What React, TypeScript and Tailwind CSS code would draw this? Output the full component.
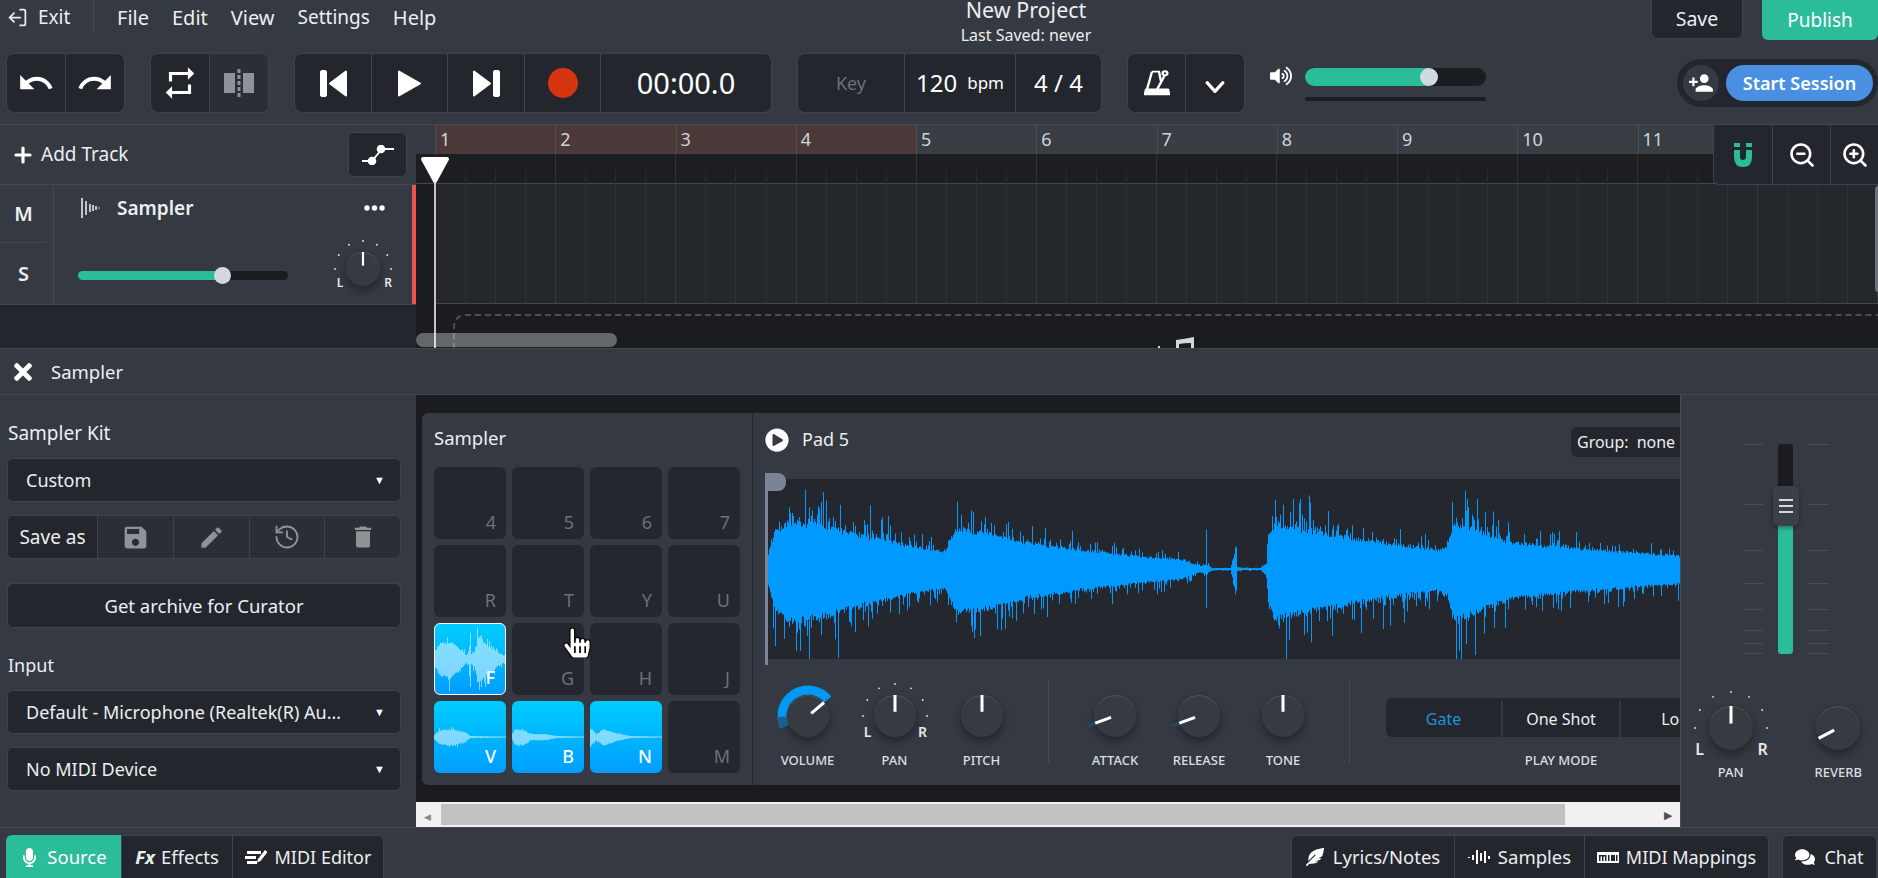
import React, { FC, ReactNode, useMemo } from "react";
import { FaComments, FaFeatherAlt, FaHandPointer, FaMicrophone, FaPlayCircle, FaTimes, FaVolumeUp } from "react-icons/fa";
import { MdDelete, MdEdit, MdPersonAdd, MdRedo, MdRepeat, MdSave, MdUndo } from "react-icons/md";
import { History, LogOut, Plus, ZoomIn, ZoomOut } from "lucide-react";

type Pt = [number, number];

const rng = (seed: number) => () => {
  seed = (seed * 1664525 + 1013904223) % 4294967296;
  return seed / 4294967296;
};

const lerp = (pts: Pt[], x: number) => {
  for (let i = 1; i < pts.length; i++) {
    if (x <= pts[i][0]) {
      const [x0, y0] = pts[i - 1];
      const [x1, y1] = pts[i];
      return y0 + ((y1 - y0) * (x - x0)) / (x1 - x0 || 1);
    }
  }
  return pts[pts.length - 1][1];
};

const wavePath = (pts: Pt[], width: number, mid: number, seed: number, spike: number) => {
  const r = rng(seed);
  let d = "";
  for (let x = 0; x < width; x++) {
    const body = lerp(pts, x);
    const top = body * (0.86 + 0.16 * r()) + (r() > 0.62 ? r() * r() * body * spike : 0);
    const bot = body * (0.96 + 0.16 * r()) + (r() > 0.62 ? r() * r() * body * spike * 1.25 : 0);
    d += `M${x + 0.5} ${(mid - top).toFixed(1)}V${(mid + bot).toFixed(1)}`;
  }
  return d;
};

const mainWave: Pt[] = [
  [0, 16], [7, 40], [22, 50], [52, 46], [92, 35], [132, 26], [177, 18], [180, 28], [190, 42], [222, 37], [262, 27], [312, 20],
  [372, 13], [412, 10], [432, 3], [437, 5], [438, 40], [439, 4], [444, 1], [462, 1], [468, 22], [469, 2], [475, 1], [492, 1],
  [498, 6], [500, 34], [507, 48], [532, 42], [612, 28], [672, 20], [679, 25], [685, 48], [702, 44], [742, 28], [812, 21], [912, 14],
];

const Group: FC<{ children: ReactNode; className?: string }> = ({ children, className }) => (
  <div className={"flex h-[60px] shrink-0 divide-x divide-[#3f434b] overflow-hidden rounded-lg border border-[#3f434b] bg-[#23262d] " + (className || "")}>
    {children}
  </div>
);

const Cell: FC<{ w: string; children?: ReactNode; className?: string }> = ({ w, children, className }) => (
  <div className={"flex items-center justify-center " + w + " " + (className || "")}>{children}</div>
);

const polar = (r: number, deg: number): Pt => {
  const a = (deg * Math.PI) / 180;
  return [r * Math.sin(a), -r * Math.cos(a)];
};

const Knob: FC<{
  r: number;
  angle: number;
  tickR?: number;
  arc?: boolean;
  dim?: boolean;
  lr?: { size: string; lx: number; rx: number; y: number };
}> = ({ r, angle, tickR, arc, dim, lr }) => {
  const [x0, y0] = polar(r * 0.2, angle);
  const [x1, y1] = polar(r, angle);
  const [dx, dy] = polar(r + 8, angle);
  const ticks = [-90, -60, -30, 0, 30, 60, 90];
  const arcPath = (from: number, to: number) => {
    const [a, b] = polar(26, from);
    const [c, d] = polar(26, to);
    return `M${a} ${b}A26 26 0 ${to - from > 180 ? 1 : 0} 1 ${c} ${d}`;
  };
  return (
    <div
      className="relative shrink-0 rounded-full bg-[#363a41] shadow-[0_4px_9px_rgba(0,0,0,0.38),inset_0_1px_0_rgba(255,255,255,0.13)]"
      style={{ width: r * 2, height: r * 2 }}
    >
      <svg className="absolute inset-0 overflow-visible" width={r * 2} height={r * 2} viewBox={`${-r} ${-r} ${r * 2} ${r * 2}`}>
        {arc && (
          <g fill="none" strokeWidth="9">
            <path d={arcPath(-114, 50)} stroke="#0099f5" />
            <path d={arcPath(-114, -92)} stroke="#1c5f8f" />
          </g>
        )}
        {dim && <line x1={x1} y1={y1} x2={dx} y2={dy} stroke="#1f4a68" strokeWidth="3" />}
        {tickR && ticks.map((t) => {
          const [tx, ty] = polar(tickR, t);
          return <circle key={t} cx={tx} cy={ty} r="0.9" fill="#e8e8e8" />;
        })}
        <line x1={x0} y1={y0} x2={x1} y2={y1} stroke="#fff" strokeWidth={r > 18 ? 3 : 2.2} />
      </svg>
      {lr && (
        <>
          <span className={"absolute font-semibold leading-none text-[#e8e8e8] " + lr.size} style={{ left: r + lr.lx, top: r + lr.y, transform: "translate(-50%,-50%)" }}>L</span>
          <span className={"absolute font-semibold leading-none text-[#e8e8e8] " + lr.size} style={{ left: r + lr.rx, top: r + lr.y, transform: "translate(-50%,-50%)" }}>R</span>
        </>
      )}
    </div>
  );
};

const KnobCol: FC<{ w: string; label: string; children: ReactNode }> = ({ w, label, children }) => (
  <div className={"flex shrink-0 flex-col items-center " + w}>
    {children}
    <span className="mt-[14px] text-[13px] leading-[18px] font-medium text-[#dcdee0]">{label}</span>
  </div>
);

const Pad: FC<{ k: string; pts?: Pt[]; mid?: number; active?: boolean; seed?: number; spike?: number }> = ({ k, pts, mid = 36, active, seed = 3, spike = 0.35 }) => {
  const d = useMemo(() => (pts ? wavePath(pts, 72, mid, seed, spike) : ""), [pts, mid, seed, spike]);
  return (
    <div
      className={
        "relative flex h-[72px] w-[72px] items-end justify-end overflow-hidden rounded-md pr-[10px] pb-[3px] text-[18px] " +
        (pts ? "bg-gradient-to-b from-[#00ccff] to-[#009dff] font-medium text-white " : "bg-[#24272e] text-[#6d7178] ") +
        (active ? "border border-white" : "")
      }
    >
      {pts && (
        <svg className="absolute inset-0" width="72" height="72">
          <path d={d} stroke="rgba(255,255,255,0.5)" strokeWidth="1" fill="none" />
        </svg>
      )}
      <span className="relative">{k}</span>
    </div>
  );
};

const Select: FC<{ label: string }> = ({ label }) => (
  <div className="flex h-[44px] items-center justify-between rounded-md border border-[#3f434b] bg-[#23262d] pr-[15px] pl-[18px] text-[18px] text-[#eceef0]">
    <span className="w-[322px] truncate">{label}</span>
    <span className="text-[11px] text-white">▼</span>
  </div>
);

const beats = Array.from({ length: 52 });
const bars = [1, 2, 3, 4, 5, 6, 7, 8, 9, 10, 11, 12, 13];
const faderTicks = [0, 60, 106, 139, 165, 186, 199, 209];
const padPts: Pt[] = [[0, 8], [5, 16], [14, 18], [22, 13], [31, 4], [33, 5], [35, 26], [36, 5], [39, 8], [44, 24], [50, 16], [62, 7], [71, 2]];
const vPts: Pt[] = [[0, 2], [5, 7], [18, 8], [30, 5], [36, 1], [72, 0.5]];
const bPts: Pt[] = [[0, 3], [3, 8], [12, 7], [18, 3], [32, 3], [44, 1], [72, 0.5]];
const nPts: Pt[] = [[0, 9], [6, 3], [13, 8], [26, 4], [40, 1], [72, 0.5]];

const App: FC = () => {
  const wave = useMemo(() => wavePath(mainWave, 912, 90, 11, 1.05), []);
  return (
    <div className="flex h-[878px] w-[1878px] flex-col overflow-hidden bg-[#353941] font-['Noto_Sans',sans-serif] text-[#eceef0]">
      {/* top bars */}
      <div className="h-[125px] shrink-0 border-b border-[#43474f]">
        <div className="flex h-[53px] items-start">
          <div className="flex h-[35px] w-[94px] shrink-0 items-center gap-[10px] border-r border-[#43474f] pl-[7px] text-[19px]">
            <LogOut size={21} className="-scale-x-100" strokeWidth={2} />
            <span>Exit</span>
          </div>
          <div className="flex h-[35px] w-[732px] shrink-0 items-center gap-[23px] pl-[23px] text-[20px]">
            <span>File</span>
            <span>Edit</span>
            <span>View</span>
            <span className="text-[19px]">Settings</span>
            <span>Help</span>
          </div>
          <div className="flex w-[400px] shrink-0 flex-col items-center">
            <span className="-mt-[4px] text-[21.500px] leading-[28px]">New Project</span>
            <span className="text-[16px] leading-[22px]">Last Saved: never</span>
          </div>
          <div className="ml-[425px] flex h-[39px] w-[92px] items-center justify-center rounded-b-md border border-t-0 border-[#3f434b] bg-[#23262d] text-[19.500px]">Save</div>
          <div className="ml-[19px] flex h-[40px] w-[116px] items-center justify-center rounded-b-md bg-[#2bbd9a] text-[19px] text-white">Publish</div>
        </div>
        <div className="flex h-[60px] items-center gap-[25px] pl-[6px]">
          <Group>
            <Cell w="w-[59px]"><MdUndo size={38} color="#fff" /></Cell>
            <Cell w="w-[58px]"><MdRedo size={38} color="#fff" /></Cell>
          </Group>
          <Group>
            <Cell w="w-[59px]"><MdRepeat size={38} color="#fff" /></Cell>
            <Cell w="w-[58px]" className="bg-[#2b2e35]">
              <svg width="30" height="28" viewBox="0 0 30 28">
                <rect x="0" y="4" width="11" height="20" fill="#8f9296" />
                <rect x="19" y="4" width="11" height="20" fill="#8f9296" />
                <line x1="15" y1="0" x2="15" y2="28" stroke="#8f9296" strokeWidth="3" strokeDasharray="4 2" />
              </svg>
            </Cell>
          </Group>
          <Group>
            <Cell w="w-[77px]">
              <svg width="27" height="27" viewBox="0 0 27 27" fill="#fff" stroke="#fff" strokeLinejoin="round">
                <rect x="0.5" y="0.5" width="6" height="26" rx="1.5" />
                <path d="M26 1.5V25.5L10 13.5Z" strokeWidth="2" />
              </svg>
            </Cell>
            <Cell w="w-[76px]">
              <svg width="23" height="27" viewBox="0 0 23 27" fill="#fff" stroke="#fff" strokeLinejoin="round" strokeWidth="2">
                <path d="M1 1.5V25.5L22 13.5Z" />
              </svg>
            </Cell>
            <Cell w="w-[77px]">
              <svg width="27" height="27" viewBox="0 0 27 27" fill="#fff" stroke="#fff" strokeLinejoin="round">
                <rect x="20.5" y="0.5" width="6" height="26" rx="1.5" />
                <path d="M1 1.5V25.5L17 13.5Z" strokeWidth="2" />
              </svg>
            </Cell>
            <Cell w="w-[76px]"><div className="h-[30px] w-[30px] rounded-full bg-[#d7350f]" /></Cell>
            <Cell w="w-[170px]" className="text-[29px] text-white">00:00.0</Cell>
          </Group>
          <Group>
            <Cell w="w-[107px]" className="text-[18px] text-[#6d7178]">Key</Cell>
            <Cell w="w-[111px]" className="items-baseline gap-[10px] text-[24px] text-white">
              <span>120</span>
              <span className="text-[17px]">bpm</span>
            </Cell>
            <Cell w="w-[85px]" className="text-[24px] text-white">4 / 4</Cell>
          </Group>
          <Group>
            <Cell w="w-[58px]">
              <svg width="26" height="26" viewBox="0 0 26 32" preserveAspectRatio="none" fill="none" stroke="#fff" strokeWidth="2.4" strokeLinejoin="round">
                <path d="M8 2H15L17 14" />
                <path d="M8 2L3 24" />
                <path d="M13 24L21 6" />
                <circle cx="21" cy="4" r="2.4" />
                <path d="M2 24H24L25 30H1Z" fill="#fff" />
              </svg>
            </Cell>
            <Cell w="w-[58px]">
              <svg className="mt-[8px]" width="22" height="14" viewBox="0 0 24 16" fill="none" stroke="#fff" strokeWidth="3.6" strokeLinecap="round" strokeLinejoin="round">
                <path d="M3 3L12 13L21 3" />
              </svg>
            </Cell>
          </Group>
          <div className="flex shrink-0 items-start gap-[13px]">
            <FaVolumeUp size={22} color="#fff" />
            <div className="mt-[3px] flex w-[181px] flex-col gap-[11px]">
              <div className="relative h-[18px] w-full rounded-full bg-[#1a1c20]">
                <div className="h-full w-[124px] rounded-l-full bg-[#2bbd9a]" />
                <div className="absolute top-0 left-[115px] h-[18px] w-[18px] rounded-full bg-[#d3d9de]" />
              </div>
              <div className="h-[4px] w-full rounded-sm bg-[#1a1c20]" />
            </div>
          </div>
          <div className="ml-[166px] flex h-[48px] w-[201px] shrink-0 items-center gap-[7px] rounded-full bg-[#23262d] pl-[6px]">
            <div className="flex h-[36px] w-[36px] items-center justify-center rounded-full bg-[#353941]"><MdPersonAdd size={26} color="#fff" /></div>
            <div className="flex h-[36px] w-[147px] items-center justify-center rounded-full bg-[#4a90e2] text-[18px] font-semibold whitespace-nowrap text-white">Start Session</div>
          </div>
        </div>
      </div>

      {/* timeline */}
      <div className="flex h-[224px] shrink-0 border-b border-[#43474f]">
        <div className="flex w-[416px] shrink-0 flex-col">
          <div className="flex h-[60px] shrink-0 items-center justify-between border-b border-[#43474f] pr-[9px] pl-[11px] text-[19px]">
            <div className="flex items-center gap-[6px]">
              <Plus size={24} strokeWidth={3.2} color="#fff" />
              <span>Add Track</span>
            </div>
            <div className="flex h-[45px] w-[59px] items-center justify-center rounded-md border border-[#3f434b] bg-[#23262d]">
              <svg width="32" height="20" viewBox="0 0 32 20" fill="none" stroke="#fff" strokeWidth="1.8">
                <path d="M0 16H10L20 4H32" />
                <circle cx="10" cy="16" r="3.4" fill="#fff" />
                <circle cx="19" cy="4" r="3.4" fill="#fff" />
              </svg>
            </div>
          </div>
          <div className="flex h-[120px] shrink-0 border-b border-[#43474f]">
            <div className="flex w-[54px] shrink-0 flex-col divide-y divide-[#43474f] border-r border-[#43474f] pr-[6px] text-[20px] font-semibold">
              <div className="flex h-[58px] items-center justify-center">M</div>
              <div className="flex flex-1 items-center justify-center">S</div>
            </div>
            <div className="relative flex-1 border-r-[4px] border-[#ef5350] pt-[12px] pl-[27px]">
              <div className="flex h-[22px] items-center">
                <svg width="21" height="20" viewBox="0 0 21 20" stroke="#e8e8e8" strokeWidth="1.6">
                  <path d="M1 0V20M5 3V17M9 6V14M12 7V13M15 8V12M18 9.5V10.5" />
                </svg>
                <span className="ml-[15px] text-[19px] font-semibold">Sampler</span>
                <svg className="ml-[171px]" width="21" height="6" viewBox="0 0 21 6" fill="#fff">
                  <circle cx="3" cy="3" r="2.7" /><circle cx="10.500" cy="3" r="2.7" /><circle cx="18" cy="3" r="2.7" />
                </svg>
              </div>
              <div className="mt-[52px] -ml-[3px] flex items-center">
                <div className="relative h-[9px] w-[210px] rounded-full bg-[#1a1c20]">
                  <div className="h-full w-[144px] rounded-l-full bg-[#2bbd9a]" />
                  <div className="absolute -top-[4px] left-[136px] h-[17px] w-[17px] rounded-full bg-[#d3d9de]" />
                </div>
              </div>
              <div className="absolute top-[67px] left-[292px]">
                <Knob r={17} angle={0} tickR={28} lr={{ size: "text-[12px]", lx: -23, rx: 25, y: 14 }} />
              </div>
            </div>
          </div>
          <div className="flex-1 bg-[#23262d]" />
        </div>
        <div className="relative flex-1 overflow-hidden">
          <div className="flex h-[29px] pl-[19px]">
            {bars.map((b) => (
              <div
                key={b}
                className={"w-[120.25px] shrink-0 border-l border-[#4a4e55] pl-[4px] text-[18px] leading-[28px] text-[#d2d4d6] " + (b <= 4 ? "bg-[#4c3a3a]" : "bg-[#393d44]")}
              >
                {b}
              </div>
            ))}
          </div>
          <div className="flex h-[30px] border-b border-[#43474f] bg-[#1c1e22] pl-[19px]">
            {beats.map((_, i) => (
              <div key={i} className={"h-full w-[30.06px] shrink-0 " + (i % 4 === 0 ? "border-l border-[#303338]" : "")}>
                {i % 4 !== 0 && <div className="mt-[16px] h-[14px] border-l border-[#292b30]" />}
              </div>
            ))}
          </div>
          <div className="flex h-[120px] border-b border-[#43474f] bg-[#24272b] pl-[19px]">
            {beats.map((_, i) => (
              <div key={i} className={"h-full w-[30.06px] shrink-0 border-l " + (i % 4 === 0 ? "border-[#363a3f]" : "border-[#2d3035]")} />
            ))}
          </div>
          <div className="absolute top-[59px] left-0 h-[120px] w-[19px] bg-[#1a1c20]" />
          <div className="relative h-[44px] bg-[#1a1c20]">
            <div className="absolute top-[10px] left-[37px] h-[40px] w-[1500px] rounded-tl-xl border-t-2 border-l-2 border-dashed border-[#4a4e56]" />
            <svg className="absolute bottom-0 left-[742px]" width="36" height="11" viewBox="0 0 36 11" fill="#d3d7da">
              <rect x="0" y="9" width="2" height="2" />
              <path d="M18 11V3Q26 2 36 0V11H33V6Q26 6 21 7V11Z" />
            </svg>
          </div>
          {/* tools over the ruler */}
          <div className="absolute top-0 right-0 flex h-[60px] w-[165px] divide-x divide-[#3f434b] rounded-bl-md border-b border-l border-[#3f434b] bg-[#23262d]">
            <Cell w="w-[59px]">
              <svg width="20" height="25" viewBox="0 0 20 25">
                <path d="M1 8H7V15Q7 18 10 18Q13 18 13 15V8H19V15Q19 25 10 25Q1 25 1 15Z" fill="#2bbd9a" />
                <rect x="1" y="1" width="6" height="4" fill="#2bbd9a" />
                <rect x="13" y="1" width="6" height="4" fill="#2bbd9a" />
              </svg>
            </Cell>
            <Cell w="w-[58px]"><ZoomOut size={28} strokeWidth={2.2} color="#fff" /></Cell>
            <Cell w="w-[47px]"><ZoomIn size={28} strokeWidth={2.2} color="#fff" /></Cell>
          </div>
          <div className="absolute top-[61px] right-0 h-[106px] w-[3px] rounded-l-sm bg-[#6e7278]" />
          {/* playhead and scrollbar */}
          <div className="absolute top-[58px] left-[18px] h-[166px] w-[2px] bg-[#c4c5c7]" />
          <svg className="absolute top-[31px] left-[4px]" width="30" height="28" viewBox="0 0 30 28" fill="#fff" stroke="#fff" strokeWidth="4" strokeLinejoin="round">
            <path d="M3 3H27L15 25Z" />
          </svg>
          <div className="absolute top-[208px] left-0 h-[14px] w-[201px] rounded-full bg-[rgba(255,255,255,0.33)]" />
        </div>
      </div>

      {/* device title */}
      <div className="flex h-[46px] shrink-0 items-center gap-[15px] border-b border-[#43474f] pl-[10px] text-[18.500px]">
        <FaTimes size={26} color="#fff" />
        <span>Sampler</span>
      </div>

      {/* device body */}
      <div className="flex h-[432px] shrink-0">
        <div className="flex w-[416px] shrink-0 flex-col px-[7px] pr-[15px]">
          <div className="mt-[25px] mb-[12px] pl-px text-[19px] leading-[26px]">Sampler Kit</div>
          <Select label="Custom" />
          <div className="mt-[13px] flex h-[44px] divide-x divide-[#3f434b] overflow-hidden rounded-md border border-[#3f434b] bg-[#2b2e35]">
            <div className="flex w-[90px] shrink-0 items-center justify-center bg-[#23262d] text-[19px]">Save as</div>
            <Cell w="flex-1"><MdSave size={29} color="#8f9296" /></Cell>
            <Cell w="flex-1"><MdEdit size={27} color="#8f9296" /></Cell>
            <Cell w="flex-1"><History size={28} strokeWidth={1.6} color="#8f9296" /></Cell>
            <Cell w="flex-1"><MdDelete size={28} color="#8f9296" /></Cell>
          </div>
          <div className="mt-[24px] flex h-[45px] items-center justify-center rounded-md border border-[#3f434b] bg-[#23262d] text-[18.500px]">Get archive for Curator</div>
          <div className="mt-[24px] mb-[12px] pl-px text-[18px] leading-[26px]">Input</div>
          <Select label="Default - Microphone (Realtek(R) Audio)" />
          <div className="h-[13px]" />
          <Select label="No MIDI Device" />
        </div>

        <div className="relative flex-1 overflow-hidden bg-[#1a1c20] pt-[18px] pl-[6px]">
          <div className="flex h-[372px] overflow-hidden rounded-l-md bg-[#353941]">
            <div className="w-[331px] shrink-0 border-r border-[#24272e] pl-[12px]">
              <div className="flex h-[54px] items-center pb-[5px] text-[18.500px]">Sampler</div>
              <div className="grid w-[306px] grid-cols-4 gap-[6px]">
                <Pad k="4" /><Pad k="5" /><Pad k="6" /><Pad k="7" />
                <Pad k="R" /><Pad k="T" /><Pad k="Y" /><Pad k="U" />
                <Pad k="F" pts={padPts} mid={35} active seed={5} spike={1.1} /><Pad k="G" /><Pad k="H" /><Pad k="J" />
                <Pad k="V" pts={vPts} /><Pad k="B" pts={bPts} seed={7} /><Pad k="N" pts={nPts} seed={9} /><Pad k="M" />
              </div>
            </div>
            <div className="relative min-w-0 flex-1">
              <div className="flex h-[66px] items-start justify-between pl-[12px]">
                <div className="mt-[13px] flex items-center gap-[13px] text-[18px]">
                  <FaPlayCircle size={24} color="#fff" />
                  <span>Pad 5</span>
                </div>
                <div className="mt-[14px] flex h-[30px] w-[109px] items-center gap-[8px] rounded-l-md bg-[#23262d] pl-[6px] text-[16px] whitespace-nowrap">
                  <span>Group:</span>
                  <span>none</span>
                </div>
              </div>
              <div className="ml-[15px] h-[180px] bg-[#24272e]">
                <svg width="912" height="180" viewBox="0 0 912 180">
                  <path d={wave} stroke="#0099ff" strokeWidth="1" fill="none" />
                </svg>
              </div>
              <div className="absolute top-[60px] left-[12px] h-[192px] w-[3px] bg-[#7b8494]" />
              <div className="absolute top-[60px] left-[12px] h-[18px] w-[21px] rounded-r-lg bg-[#7b8494]" />
              <div className="flex pt-[36px] pl-[11px]">
                <KnobCol w="w-[87px]" label="VOLUME"><Knob r={21} angle={50} arc /></KnobCol>
                <KnobCol w="w-[87px]" label="PAN"><Knob r={21} angle={0} tickR={32} lr={{ size: "text-[14px]", lx: -27, rx: 28, y: 16 }} /></KnobCol>
                <KnobCol w="w-[87px]" label="PITCH"><Knob r={21} angle={0} /></KnobCol>
                <div className="mt-[-16px] ml-[23px] h-[84px] w-px shrink-0 bg-[#484c54]" />
                <div className="w-[24px] shrink-0" />
                <KnobCol w="w-[84px]" label="ATTACK"><Knob r={21} angle={-110} dim /></KnobCol>
                <KnobCol w="w-[84px]" label="RELEASE"><Knob r={21} angle={-110} dim /></KnobCol>
                <KnobCol w="w-[84px]" label="TONE"><Knob r={21} angle={0} /></KnobCol>
                <div className="mt-[-16px] ml-[24px] h-[84px] w-px shrink-0 bg-[#484c54]" />
                <div className="ml-[36px] mt-[3px] flex w-[296px] shrink-0 flex-col items-center">
                  <div className="flex h-[39px] w-full divide-x-2 divide-[#353941] rounded-l-md bg-[#23262d] pt-[3px] text-[16px]">
                    <div className="flex w-[117px] shrink-0 items-center justify-center text-[#1e93dc]">Gate</div>
                    <div className="flex w-[118px] shrink-0 items-center justify-center">One Shot</div>
                    <div className="flex w-[118px] shrink-0 items-center justify-center">Loop</div>
                  </div>
                  <span className="mt-[14px] ml-[54px] text-[13px] leading-[18px] font-medium text-[#dcdee0]">PLAY MODE</span>
                </div>
              </div>
            </div>
          </div>
          <div className="absolute right-0 bottom-[0px] left-0 flex h-[25px] items-center justify-between border-y-2 border-[#f1f1f1] bg-[#f1f1f1]">
            <div className="ml-[25px] h-full w-[1124px] bg-[#c1c1c1]" />
            <span className="mr-[8px] text-[11px] leading-none text-[#505050]">▶</span>
          </div>
          <span className="absolute bottom-[6px] left-[8px] text-[9px] leading-none text-[#8a8a8a]">◀</span>
        </div>

        <div className="flex w-[198px] shrink-0 flex-col border-l border-[#4a4e55]">
          <div className="relative mt-[49px] ml-[63px] h-[210px] w-[85px]">
            {faderTicks.map((t) => (
              <React.Fragment key={t}>
                <div className="absolute left-0 h-px w-[19px] bg-[#484c54]" style={{ top: t }} />
                <div className="absolute left-[64px] h-px w-[21px] bg-[#484c54]" style={{ top: t }} />
              </React.Fragment>
            ))}
            <div className="absolute top-0 left-[34px] h-[210px] w-[15px] overflow-hidden rounded-[3px] bg-[#1a1c20]">
              <div className="mt-[82px] h-[128px] w-full bg-[#2bbd9a]" />
            </div>
            <div className="absolute top-[42px] left-[28.5px] flex h-[40px] w-[26px] items-center justify-center rounded-md bg-[#3b3f47] shadow-[0_2px_4px_rgba(0,0,0,0.35)]">
              <svg width="14" height="16" viewBox="0 0 14 16" fill="#d6d8da">
                <rect y="1" width="14" height="2" /><rect y="7" width="14" height="2" /><rect y="13" width="14" height="2" />
              </svg>
            </div>
          </div>
          <div className="mt-[52px] flex">
            <div className="flex w-[100px] flex-col items-center">
              <Knob r={22} angle={0} tickR={36} lr={{ size: "text-[16px]", lx: -31, rx: 32, y: 21 }} />
              <span className="mt-[13px] text-[13px] leading-[18px] font-medium text-[#dcdee0]">PAN</span>
            </div>
            <div className="ml-[18px] flex w-[80px] flex-col items-center">
              <Knob r={22} angle={-118} />
              <span className="mt-[13px] text-[13px] leading-[18px] font-medium text-[#dcdee0]">REVERB</span>
            </div>
          </div>
        </div>
      </div>

      {/* bottom tabs */}
      <div className="flex flex-1 items-end justify-between border-t border-[#43474f] px-[6px] pr-px text-[18px]">
        <div className="flex h-[43px] divide-x divide-[#3f434b] rounded-t-md border border-b-0 border-[#3f434b] bg-[#23262d]">
          <div className="-my-px -ml-px flex w-[116px] items-center justify-center gap-[8px] rounded-tl-md bg-[#2bbd9a] text-[18.500px] text-white">
            <FaMicrophone size={19} />
            <span>Source</span>
          </div>
          <div className="flex w-[111px] items-center justify-center gap-[6px] text-[18.500px]">
            <span className="font-bold italic">Fx</span>
            <span>Effects</span>
          </div>
          <div className="flex w-[150px] items-center justify-center gap-[8px]">
            <svg width="22" height="16" viewBox="0 0 22 16" fill="#fff">
              <rect x="2" y="2" width="14" height="3" /><rect x="0" y="7" width="11" height="3" /><rect x="2" y="12" width="10" height="3" />
              <path d="M13 10L20 1L22.500 3L15.500 12L12 13.500Z" />
            </svg>
            <span>MIDI Editor</span>
          </div>
        </div>
        <div className="flex gap-[13px]">
          <div className="flex h-[43px] divide-x divide-[#3f434b] rounded-t-md border border-b-0 border-[#3f434b] bg-[#23262d]">
            <div className="flex w-[163px] items-center justify-center gap-[9px] text-[18.500px]">
              <FaFeatherAlt size={18} color="#fff" />
              <span>Lyrics/Notes</span>
            </div>
            <div className="flex w-[130px] items-center justify-center gap-[8px] text-[18.500px]">
              <svg width="22" height="16" viewBox="0 0 22 16" stroke="#fff" strokeWidth="2">
                <path d="M1 8V9M5 6V11M9 1V15M13 4V12M17 2V14M21 7V10" />
              </svg>
              <span>Samples</span>
            </div>
            <div className="flex w-[183px] items-center justify-center gap-[7px]">
              <svg width="22" height="11" viewBox="0 0 22 11" fill="#fff">
                <path d="M0 0H22V11H0ZM2 3V9H3.5V4.500H5V9H6.500V4.500H8V9H9.500V3ZM11 3V9H12.500V3ZM14 3V9H18V3ZM19 3V9H20.500V3Z" fillRule="evenodd" />
              </svg>
              <span>MIDI Mappings</span>
            </div>
          </div>
          <div className="flex h-[43px] w-[95px] items-center justify-center gap-[9px] rounded-t-md border border-b-0 border-[#3f434b] bg-[#23262d]">
            <FaComments size={20} color="#fff" />
            <span>Chat</span>
          </div>
        </div>
      </div>

      {/* cursor over pad G */}
      <FaHandPointer size={30} className="absolute top-[628px] left-[562px] fill-white stroke-black stroke-[20]" />
    </div>
  );
};

export default App;
